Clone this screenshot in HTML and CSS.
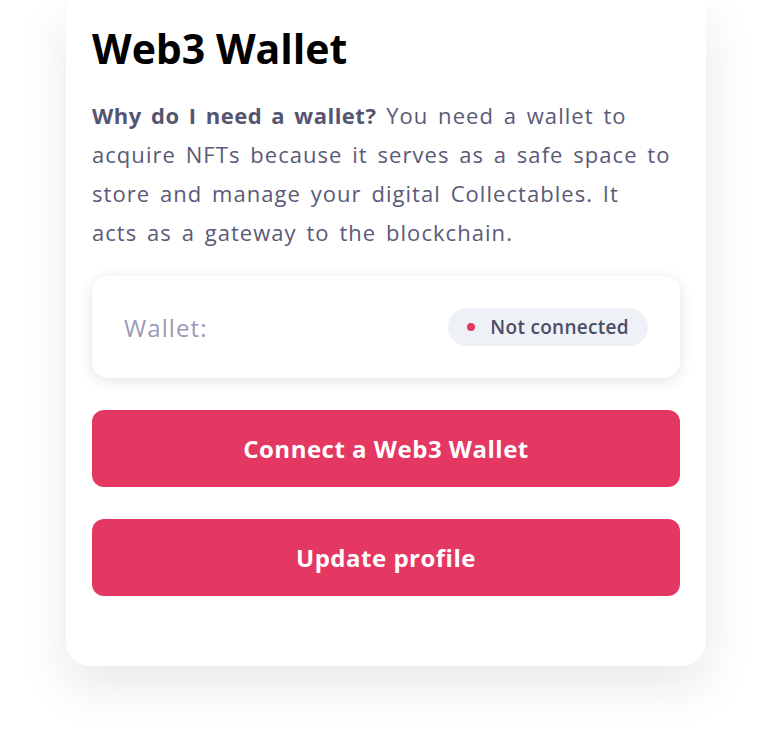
FILE: index.html
```html
<!DOCTYPE html>
<html lang="en">
<head>
<meta charset="utf-8">
<title>Web3 Wallet</title>
<link rel="stylesheet" href="styles.css">
</head>
<body>
<main class="page">
  <section class="card">
    <h1 class="title">Web3 Wallet</h1>
    <p class="intro"><strong>Why do I need a wallet?</strong> You need a wallet to acquire NFTs because it serves as a safe space to store and manage your digital Collectables. It<br>acts as a gateway to the blockchain.</p>
    <div class="wallet-box">
      <span class="wallet-label">Wallet:</span>
      <span class="status-pill"><span class="status-dot"></span>Not connected</span>
    </div>
    <button class="btn" type="button">Connect a Web3 Wallet</button>
    <button class="btn" type="button">Update profile</button>
  </section>
</main>
</body>
</html>
```
FILE: styles.css
```css
* { box-sizing: border-box; }
html, body { margin: 0; padding: 0; background: #ffffff; }
body { font-family: "Open Sans", "Noto Sans", sans-serif; }
.page {
  display: flex;
  justify-content: center;
  padding: 0 76px 72px 66px;
}
.card {
  width: 640px;
  background: #ffffff;
  border-radius: 0 0 24px 24px;
  box-shadow: 0 20px 50px rgba(30, 30, 60, 0.10);
  padding: 20px 26px 70px;
  display: flex;
  flex-direction: column;
}
.title {
  margin: 0;
  font-size: 41px;
  line-height: 56px;
  font-weight: 700;
  color: #000000;
  letter-spacing: 0;
}
.intro {
  margin: 20px 0 0;
  font-size: 22px;
  line-height: 39px;
  letter-spacing: 1.05px;
  word-spacing: 3px;
  color: #5a5a77;
}
.intro strong { font-weight: 700; color: #555572; letter-spacing: 0.5px; }
.wallet-box {
  margin-top: 24px;
  height: 102px;
  border-radius: 16px;
  background: #ffffff;
  box-shadow: 0 3px 14px rgba(30, 30, 60, 0.12);
  display: flex;
  align-items: center;
  justify-content: space-between;
  padding: 0 32px;
}
.wallet-label {
  font-size: 24px;
  letter-spacing: 1.1px;
  color: #9a9ab5;
}
.status-pill {
  display: flex;
  align-items: center;
  height: 38px;
  padding: 0 19px 0 19px;
  background: #eef1f5;
  border-radius: 19px;
  font-size: 19px;
  font-weight: 600;
  letter-spacing: 0.3px;
  color: #4d4d68;
}
.status-dot {
  width: 8px;
  height: 8px;
  border-radius: 50%;
  background: #e43762;
  margin-right: 15px;
}
.btn {
  margin-top: 32px;
  height: 77px;
  border: 0;
  border-radius: 12px;
  background: #e43762;
  color: #ffffff;
  font-family: inherit;
  font-size: 24px;
  font-weight: 700;
  letter-spacing: 0.5px;
  cursor: pointer;
}
```
